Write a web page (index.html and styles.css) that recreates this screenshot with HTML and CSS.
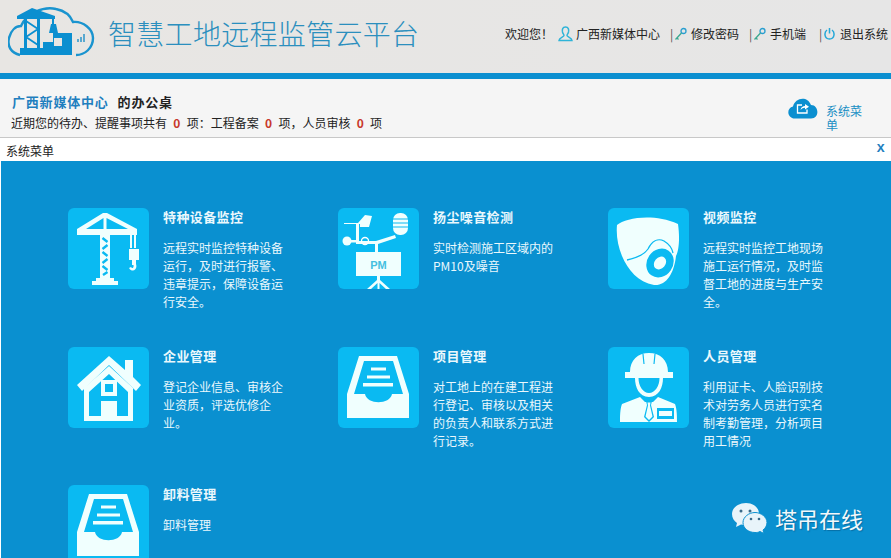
FILE: index.html
```html
<!DOCTYPE html>
<html>
    <head>
        <title>智慧工地远程监管云平台</title>
        <meta charset="UTF-8">
        <link rel="stylesheet" href="styles.css">
    </head>
    <body>
        <svg class="defs" width="0" height="0">
            <symbol id="tray" viewBox="0 0 81 81">
                <path d="M21 9H59L71 47V71H9V47ZM26 14L16 47H27C29 58 52 58 54 47H65L55 14Z" fill-rule="evenodd"/>
                <path d="M33 20.500H48V23.500H33ZM29 28.500H52V31.500H29ZM25 36H55V39.500H25Z"/>
            </symbol>
        </svg>
        <header class="top-bar">
            <div class="brand">
                <svg class="logo" width="88" height="52" viewBox="0 0 88 52">
                    <path d="M12 50C3 48 -1 41 1 33C3 25 8 21 13 21C18 9 35 1 48 4C58 6 63 12 65 17C75 16 85 24 85 33C85 43 77 50 68 50" fill="none" stroke="#1a94cf" stroke-width="2.400"/>
                    <path d="M12 43H35V37H45V28H64V50H12Z" fill="#0b8fd0"/>
                    <path d="M46 33H54V41H46Z" fill="#e8e6e3"/>
                    <path d="M9 11L24 3L47 11V14H32V44H29V14H19V44H16V14H9Z" fill="#0b8fd0"/>
                    <path d="M18 16L30 24L18 32L30 40" fill="none" stroke="#0b8fd0" stroke-width="1.800"/>
                    <path d="M44 14H46V19H48L50 28H41L43 19H44Z" fill="#0b8fd0"/>
                    <path d="M69 34H71V37H69ZM72 32H74V37H72ZM75 29H77V37H75Z" fill="#5aa9d0"/>
                </svg>
                <div class="brand-name">智慧工地远程监管云平台</div>
            </div>
            <nav class="user-nav">
                <span class="welcome">欢迎您！</span>
                <svg class="nav-user" width="15" height="16" viewBox="0 0 15 16"><path d="M7.500 1C4.500 1 4 3.500 4.500 6C5 8 6 8.500 6 9.500C6 11 1 11.500 1 14.500H14C14 11.500 9 11 9 9.500C9 8.500 10 8 10.500 6C11 3.500 10.500 1 7.500 1Z" fill="none" stroke="#2fb4d8" stroke-width="1.500"/></svg>
                <span class="nav-name">广西新媒体中心</span>
                <span class="sep">|</span>
                <svg class="nav-key" width="13" height="14" viewBox="0 0 13 14"><circle cx="9.500" cy="4" r="2.500" fill="none" stroke="#2a9fd0" stroke-width="1.300"/><path d="M7.500 6L1.500 12.500M3 11L4.500 12.500" fill="none" stroke="#3aa890" stroke-width="1.300"/></svg>
                <span class="nav-link">修改密码</span>
                <span class="sep">|</span>
                <svg class="nav-key" width="13" height="14" viewBox="0 0 13 14"><circle cx="9.500" cy="4" r="2.500" fill="none" stroke="#2a9fd0" stroke-width="1.300"/><path d="M7.500 6L1.500 12.500M3 11L4.500 12.500" fill="none" stroke="#3aa890" stroke-width="1.300"/></svg>
                <span class="nav-link nav-phone">手机端</span>
                <span class="sep">|</span>
                <svg class="nav-power" width="11" height="13" viewBox="0 0 11 13"><path d="M3 3C0 5 0 12 5.500 12C11 12 11 5 8 3M5.500 1V6.500" fill="none" stroke="#25a8d8" stroke-width="1.500"/></svg>
                <span class="nav-link nav-exit">退出系统</span>
            </nav>
        </header>

        <section class="desk">
            <div class="desk-info">
                <div class="desk-title"><span class="desk-org">广西新媒体中心</span>的办公桌</div>
                <div class="desk-todo">近期您的待办、提醒事项共有<b>0</b>项：工程备案<b>0</b>项，人员审核<b>0</b>项</div>
            </div>
            <div class="desk-menu">
                <svg width="30" height="22" viewBox="0 0 30 22">
                    <path d="M7 21.500C-1 21.500 -2 11 5 9.500C7 1 19 -2 23 8C31 8 32 21.500 23 21.500Z" fill="#0b8fd0"/>
                    <path d="M14 8H9.500V16H19V12.500" fill="none" stroke="#fff" stroke-width="1.300"/>
                    <path d="M12.500 13C13 10 15 9 17 9V7L21 9.800L17 12.500V10.800C15 10.800 14 11.500 12.500 13Z" fill="#fff"/>
                </svg>
                <span class="desk-menu-label">系统菜单</span>
            </div>
        </section>

        <div class="menu-title">
            <span>系统菜单</span>
            <span class="menu-close">x</span>
        </div>

        <main class="menu-panel">
            <div class="menu-grid">
                <div class="menu-item">
                    <svg class="tile" viewBox="0 0 81 81">
                        <path d="M35 5H39L69 21V27H9V21ZM35.500 10L18 21H35.500ZM38.500 10V21H60Z" fill-rule="evenodd"/>
                        <path d="M32 27H42V70H32ZM24 73V77H50V73L46 73V70H28V73Z"/>
                        <path d="M34.500 30L39.500 34M39.500 37L34.500 41M34.500 44L39.500 48M39.500 51L34.500 55M34.500 58L39.500 62M39.500 64L35 67" fill="none" stroke="#0abaf2" stroke-width="2.400"/>
                        <path d="M62 27H64V40H62ZM66 27H68V40H66ZM61 41H71V52H61ZM64 52H68V56C70 62 64 65 61 60L63 59C64 61 66 60 65.500 57H64Z"/>
                    </svg>
                    <div class="item-text">
                        <h3>特种设备监控</h3>
                        <p>远程实时监控特种设备运行，及时进行报警、违章提示，保障设备运行安全。</p>
                    </div>
                </div>
                <div class="menu-item">
                    <svg class="tile" viewBox="0 0 81 81">
                        <path d="M6 15H20L27 7L34 8L31 19H22V16H6Z"/>
                        <path d="M18 16H21V33H40V44H37V36H18Z"/>
                        <path d="M38 33L57 27L58 30L40 36Z"/>
                        <rect x="55" y="5" width="15" height="22" rx="7"/>
                        <path d="M55 11H70M55 15H70M55 19H70" stroke="#0abaf2" stroke-width="1"/>
                        <circle cx="9" cy="33" r="4.500"/>
                        <path d="M12 32H19V34.500H12Z"/>
                        <circle cx="27" cy="33" r="3.500" fill="none" stroke="#fff" stroke-width="1.300"/>
                        <rect x="18" y="44" width="45" height="24"/>
                        <text class="pm-text" x="40.500" y="60.500" text-anchor="middle">PM</text>
                        <path d="M39 68H42V72L52 81H48L41.500 75V81H39.500V75L33 81H29L39 72Z"/>
                    </svg>
                    <div class="item-text">
                        <h3>扬尘噪音检测</h3>
                        <p>实时检测施工区域内的PM10及噪音</p>
                    </div>
                </div>
                <div class="menu-item">
                    <svg class="tile" viewBox="0 0 81 81">
                        <path d="M9 17C18 10 45 5 70 16C72 30 71 42 68 48C66 66 58 78 46 77C30 74 20 62 14 48C10 38 8 28 9 17Z"/>
                        <path d="M19 52C28 50 36 47 40 41C44 33 50 30 56 33C61 36 64 40 65 45" fill="none" stroke="#0abaf2" stroke-width="1.300"/>
                        <ellipse cx="52" cy="55" rx="13" ry="15" transform="rotate(35 52 55)" fill="#0abaf2"/>
                        <ellipse cx="52" cy="55" rx="5.500" ry="7" transform="rotate(40 52 55)" fill="#f0fffe"/>
                    </svg>
                    <div class="item-text">
                        <h3>视频监控</h3>
                        <p>远程实时监控工地现场施工运行情况，及时监督工地的进度与生产安全。</p>
                    </div>
                </div>
                <div class="menu-item">
                    <svg class="tile" viewBox="0 0 81 81">
                        <path d="M41 9L57 23V13H65V30L73 38L68 44L41 18L14 44L9 38Z"/>
                        <path d="M16 41L41 19L65 41V74H16ZM21 45V69H33V54H49V69H60V45L41 27Z" fill-rule="evenodd"/>
                        <path d="M33 33H49V49H33ZM37 37V45H45V37Z" fill-rule="evenodd"/>
                    </svg>
                    <div class="item-text">
                        <h3>企业管理</h3>
                        <p>登记企业信息、审核企业资质，评选优修企业。</p>
                    </div>
                </div>
                <div class="menu-item">
                    <svg class="tile"><use href="#tray"/></svg>
                    <div class="item-text">
                        <h3>项目管理</h3>
                        <p>对工地上的在建工程进行登记、审核以及相关的负责人和联系方式进行记录。</p>
                    </div>
                </div>
                <div class="menu-item">
                    <svg class="tile" viewBox="0 0 81 81">
                        <path d="M22 25C22 13 30 6 41 6C52 6 60 13 60 25H65V31H17V25Z"/>
                        <path d="M35 7L36 17M47 7L46 17" stroke="#0abaf2" stroke-width="1.200"/>
                        <path d="M27 31C27 40 31 50 41 50C51 50 55 40 55 31H51.500C51.500 39 47 46 41 46C35 46 30.500 39 30.500 31Z"/>
                        <path d="M32 50L14 57C12 62 12 70 12 75H69C69 70 69 62 67 57L50 50L45 55H37Z"/>
                        <path d="M38 54H44L43 58L46 70L41 75L36 70L39 58Z" fill="#0abaf2"/>
                        <path d="M39.500 55.500H42.500L42 58.500L44.500 69.500L41 73L37.500 69.500L40 58.500Z"/>
                        <path d="M49 61H66V72H49ZM51 64V69H64V64Z" fill="#0abaf2" fill-rule="evenodd"/>
                    </svg>
                    <div class="item-text">
                        <h3>人员管理</h3>
                        <p>利用证卡、人脸识别技术对劳务人员进行实名制考勤管理，分析项目用工情况</p>
                    </div>
                </div>
                <div class="menu-item">
                    <svg class="tile"><use href="#tray"/></svg>
                    <div class="item-text">
                        <h3>卸料管理</h3>
                        <p>卸料管理</p>
                    </div>
                </div>
            </div>
        </main>

        <div class="watermark">
            <svg width="36" height="32" viewBox="0 0 36 32">
                <path d="M14 1C6 1 0 6 0 12C0 16 2 19 5 21L4 25L9 22.500C11 23 12 23 14 23C22 23 27 18 27 12C27 6 22 1 14 1Z" fill="#e8f4fa"/>
                <circle cx="9" cy="9" r="1.500" fill="#3a6a88"/><circle cx="18" cy="9" r="1.500" fill="#3a6a88"/>
                <path d="M23 10.500C29 10.500 35 15 35 20.500C35 24 33 26.500 31 28L32 31.500L28 29.500C26 30.500 25 30.500 23 30.500C16 30.500 11 26 11 20.500C11 15 17 10.500 23 10.500Z" fill="#e8f4fa" stroke="#0a90d0" stroke-width="1"/>
                <circle cx="19" cy="17" r="1.300" fill="#3a6a88"/><circle cx="27" cy="17" r="1.300" fill="#3a6a88"/>
            </svg>
            <span>塔吊在线</span>
        </div>
    </body>
</html>
```

FILE: styles.css
```css
html {
    overflow: hidden;
}

body {
    margin: 0;
    height: 558px;
    overflow: hidden;
    position: relative;
    font-family: "Noto Sans CJK SC", "Liberation Sans", sans-serif;
    font-size: 12px;
    color: #222;
}

.defs {
    display: none;
}

.top-bar {
    height: 73px;
    background: linear-gradient(to right, #e8e6e3, #e6e6e6);
    border-bottom: 6px solid #0b8fd0;
    display: flex;
    justify-content: space-between;
}

.brand {
    display: flex;
    align-items: flex-start;
    padding: 5px 0 0 8px;
}

.logo {
    flex: none;
}

.brand-name {
    margin: 9px 0 0 12px;
    font-size: 28px;
    line-height: 38px;
    font-weight: 300;
    letter-spacing: 0.3px;
    color: #2b8fbe;
}

.user-nav {
    display: flex;
    align-items: center;
    height: 67px;
    width: 386px;
    flex: none;
    white-space: nowrap;
    line-height: 16px;
}

.user-nav > * {
    flex: none;
}

.welcome {
    width: 53px;
}

.nav-user {
    margin-right: 3px;
}

.nav-name {
    width: 94px;
}

.sep {
    width: 4px;
    color: #555;
}

.nav-key {
    margin-right: 4px;
}

.nav-power {
    margin: 0 5px 0 1px;
}

.nav-link {
    width: 58px;
}

.nav-phone {
    width: 49px;
}

.nav-exit {
    width: 48px;
}

.desk {
    height: 58px;
    background: #f5f5f5;
    border-bottom: 1px solid #c8c8c8;
    display: flex;
    justify-content: space-between;
}

.desk-info {
    padding: 14px 0 0 12px;
}

.desk-title {
    font-size: 13px;
    font-weight: bold;
    line-height: 18px;
    letter-spacing: 0.8px;
}

.desk-org {
    color: #1f7fbf;
    margin-right: 9px;
}

.desk-todo {
    margin-left: -1px;
    line-height: 18px;
    margin-top: 3px;
}

.desk-todo b {
    color: #c8392b;
    margin: 0 6.300px;
}

.desk-menu {
    display: flex;
    align-items: flex-start;
    width: 103px;
    padding-top: 18px;
}

.desk-menu-label {
    width: 36px;
    margin: 7px 0 0 8px;
    color: #1a8fc4;
    line-height: 14px;
}

.menu-title {
    height: 23px;
    box-sizing: border-box;
    background: #fff;
    display: flex;
    justify-content: space-between;
    align-items: center;
    padding: 1px 6px 0;
}

.menu-close {
    color: #1f7fbf;
    font-weight: bold;
    font-family: "Liberation Mono", monospace;
    font-size: 14px;
    margin-bottom: 4px;
}

.menu-panel {
    height: 397px;
    box-sizing: border-box;
    overflow: hidden;
    background: #0a90d0;
    border-left: 1px solid #fff;
    padding: 47px 0 0 67px;
}

.menu-grid {
    display: grid;
    grid-template-columns: repeat(3, 270px);
    grid-auto-rows: 138.500px;
}

.menu-item {
    display: flex;
    align-items: flex-start;
}

.tile {
    flex: none;
    width: 81px;
    height: 81px;
    background: #0abaf2;
    border-radius: 6px;
    fill: #f0fffe;
}

.pm-text {
    font-family: "Liberation Sans", sans-serif;
    font-size: 11px;
    font-weight: bold;
    fill: #45bfe0;
}

.item-text {
    width: 122px;
    margin-left: 14px;
    color: #eaf8fd;
}

.item-text h3 {
    margin: 0 0 13px;
    font-size: 13px;
    line-height: 18px;
    font-weight: bold;
    letter-spacing: 0.4px;
}

.item-text p {
    margin: 0;
    font-size: 12px;
    line-height: 18px;
}

.watermark {
    position: absolute;
    left: 732px;
    top: 502px;
    display: flex;
    align-items: center;
    color: #f2f8fb;
    font-size: 22px;
    line-height: 32px;
    text-shadow: 1px 1px 1px rgba(0, 60, 100, 0.4);
}

.watermark span {
    margin-left: 7px;
}
```
